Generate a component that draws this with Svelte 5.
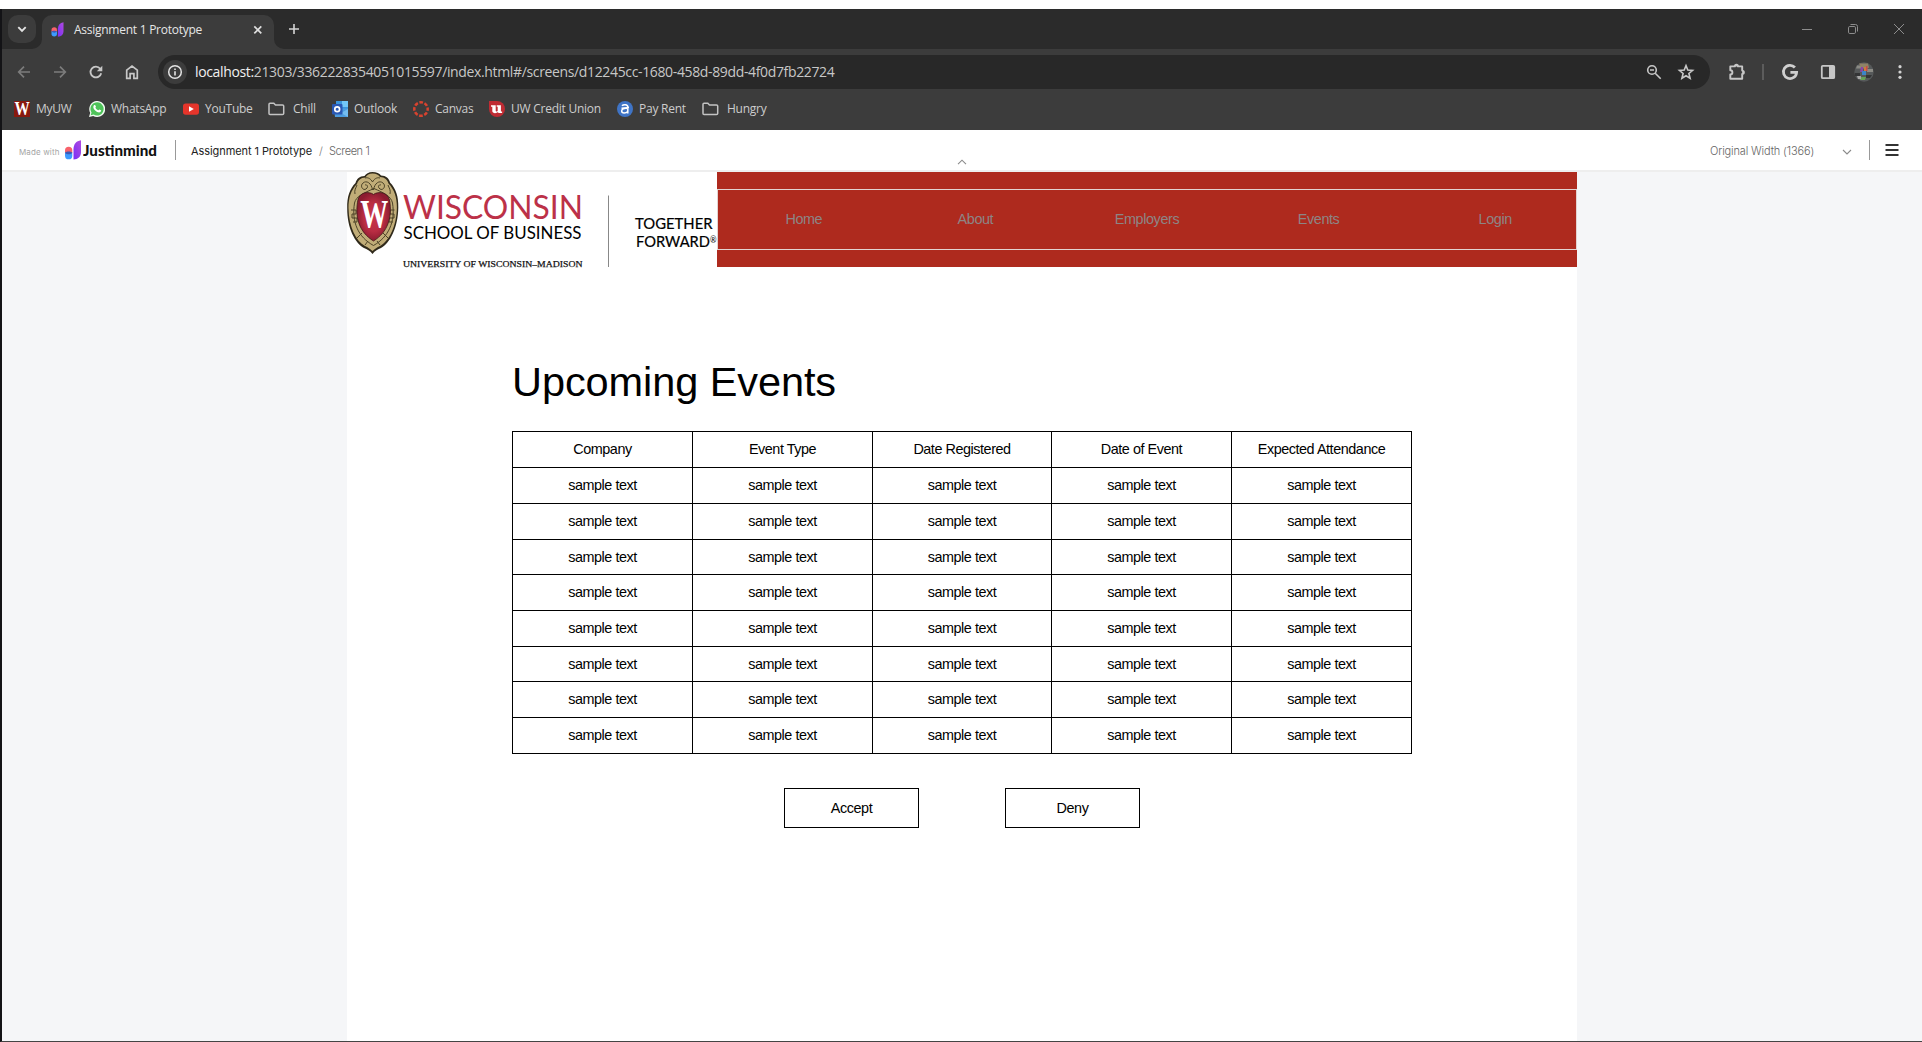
<script>
  const bookmarks = [
    { icon: 'uw', label: 'MyUW', width: 75 },
    { icon: 'whatsapp', label: 'WhatsApp', width: 94 },
    { icon: 'youtube', label: 'YouTube', width: 85 },
    { icon: 'folder', label: 'Chill', width: 64 },
    { icon: 'outlook', label: 'Outlook', width: 81 },
    { icon: 'canvas', label: 'Canvas', width: 76 },
    { icon: 'credit', label: 'UW Credit Union', width: 128 },
    { icon: 'rent', label: 'Pay Rent', width: 85 },
    { icon: 'folder', label: 'Hungry', width: 80 },
  ];
  const nav = ['Home', 'About', 'Employers', 'Events', 'Login'];
  const columns = ['Company', 'Event Type', 'Date Registered', 'Date of Event', 'Expected Attendance'];
  const rows = Array.from({ length: 8 }, () => columns.map(() => 'sample text'));
</script>

<div class="screen">
  <div class="window">
    <div class="tabstrip">
      <button class="tab-search" aria-label="Search tabs">
        <svg width="28" height="28" viewBox="0 0 28 28"><path d="M10.3 12.2l3.7 3.7 3.7-3.7" fill="none" stroke="#e3e3e3" stroke-width="1.9" /></svg>
      </button>
      <div class="tab">
        <svg class="corner left" width="10" height="10" viewBox="0 0 10 10"><path d="M10 0v10H0A10 10 0 0 0 10 0z" fill="#3c3c3c" /></svg>
        <svg class="favicon" width="13" height="15" viewBox="0 0 16 20"><use href="#jim" /></svg>
        <span class="tab-title">Assignment 1 Prototype</span>
        <svg class="tab-close" width="10" height="10" viewBox="0 0 10 10"><path d="M1.3 1.3l7 7M8.3 1.3l-7 7" stroke="#dedede" stroke-width="1.7" /></svg>
        <svg class="corner right" width="10" height="10" viewBox="0 0 10 10"><path d="M0 0v10h10A10 10 0 0 1 0 0z" fill="#3c3c3c" /></svg>
      </div>
      <svg class="new-tab" width="12" height="12" viewBox="0 0 12 12"><path d="M6 1v10M1 6h10" stroke="#d5d5d5" stroke-width="1.6" /></svg>
      <div class="controls">
        <svg width="12" height="12" viewBox="0 0 12 12"><path d="M1 6.5h10" stroke="#8d8d8d" /></svg>
        <svg width="12" height="12" viewBox="0 0 12 12" fill="none" stroke="#8d8d8d"><rect x="1.5" y="3.5" width="7" height="7" rx="1.3" /><path d="M3.5 1.5h5a2 2 0 0 1 2 2v5" /></svg>
        <svg width="12" height="12" viewBox="0 0 12 12"><path d="M1 1l10 10M11 1L1 11" stroke="#8d8d8d" /></svg>
      </div>
    </div>

    <div class="toolbar">
      <div class="nav-icons">
        <svg width="16" height="16" viewBox="0 0 16 16" fill="none" stroke="#7c7c7c" stroke-width="1.7"><path d="M14 8H3M8 2.7L2.7 8 8 13.3" /></svg>
        <svg width="16" height="16" viewBox="0 0 16 16" fill="none" stroke="#7c7c7c" stroke-width="1.7"><path d="M2 8h11M8 2.7L13.3 8 8 13.3" /></svg>
        <svg width="16" height="16" viewBox="0 0 16 16"><path d="M13.2 9.2A5.4 5.4 0 1 1 12.2 4.7L13.4 6" fill="none" stroke="#c7c7c7" stroke-width="1.8" /><path d="M14.3 1.7v5.5H8.8z" fill="#c7c7c7" /></svg>
        <svg width="16" height="16" viewBox="0 0 16 16"><path d="M2.7 6.2L8 2.1l5.3 4.1v8.1H9.9V9.6H6.1v4.7H2.7z" fill="none" stroke="#c7c7c7" stroke-width="1.7" /></svg>
      </div>
      <div class="omnibox">
        <span class="site-info">
          <svg width="16" height="16" viewBox="0 0 16 16"><circle cx="8" cy="8" r="6.3" fill="none" stroke="#e3e3e3" stroke-width="1.5" /><path d="M8 7.2v4.2M8 4.4v1.6" stroke="#e3e3e3" stroke-width="1.6" /></svg>
        </span>
        <span class="url"><b>localhost:</b>21303/3362228354051015597/index.html#/screens/d12245cc-1680-458d-89dd-4f0d7fb22724</span>
        <svg class="zoom" width="16" height="16" viewBox="0 0 16 16" fill="none" stroke="#c7c7c7" stroke-width="1.6"><circle cx="6" cy="6" r="4.3" /><path d="M9.2 9.2l5.5 5.5M4 6h4" /></svg>
        <svg width="18" height="18" viewBox="0 0 18 18"><path d="M9 2.6l1.8 4.4 4.8.4-3.7 3.1 1.2 4.7L9 12.7l-4.1 2.5 1.2-4.7-3.7-3.1 4.8-.4z" fill="none" stroke="#c7c7c7" stroke-width="1.6" /></svg>
      </div>
      <div class="actions">
        <svg width="18" height="18" viewBox="0 0 18 18"><path d="M2.3 3.4h4.5a1.6 1.6 0 0 1 3.2 0h4.2v4.2a1.6 1.6 0 0 1 0 3.4v4.7H2.3v-4.2c2.8-.2 2.8-4 0-4.2z" fill="none" stroke="#c7c7c7" stroke-width="1.9" stroke-linejoin="round" /><path d="M6.7 3.4a1.7 1.7 0 0 1 3.4 0zM14.2 7.5a1.8 1.8 0 0 1 0 3.4z" fill="#c7c7c7" /></svg>
        <span class="split"></span>
        <svg width="18" height="18" viewBox="0 0 18 18"><path d="M13.9 4.5A6.6 6.6 0 1 0 15.6 9.3H9.4" fill="none" stroke="#cfcfcf" stroke-width="2.8" /></svg>
        <svg width="16" height="16" viewBox="0 0 16 16"><rect x="1.8" y="1.8" width="12.4" height="12.4" rx="1" fill="none" stroke="#c7c7c7" stroke-width="1.8" /><path d="M9 2h5v12H9z" fill="#c7c7c7" /></svg>
        <svg class="avatar" width="20" height="20" viewBox="0 0 20 20">
          <circle cx="10" cy="10" r="9.7" fill="#56595a" />
          <path d="M3 3.5h5v3H2zM13 7h6v3h-6z" fill="#8a8a84" /><path d="M1 11h5v3H1zM12 13h6l-2 3h-4z" fill="#343536" />
          <path d="M5 1.500h9l1 4-3 2-5-2z" fill="#8f8266" /><path d="M7 5h2v5H6z" fill="#8b45a8" /><path d="M10 5h2v5h-2z" fill="#d0783a" /><path d="M8 9h4v4H8z" fill="#3c85c8" /><path d="M12 4h1.500v5H12z" fill="#c84a4a" /><path d="M7 15h5l-1 3H6z" fill="#65a056" /><path d="M3 14h4v3H4z" fill="#a7a7a7" />
        </svg>
        <svg width="16" height="16" viewBox="0 0 16 16" fill="#d4d4d4"><circle cx="8" cy="2.7" r="1.6" /><circle cx="8" cy="8" r="1.6" /><circle cx="8" cy="13.3" r="1.6" /></svg>
      </div>
    </div>

    <div class="bookmarks">
      {#each bookmarks as mark}
        <div class="bookmark" class:folder={mark.icon === 'folder'} style="width: {mark.width}px">
          {#if mark.icon === 'uw'}
            <svg class="uw" width="16" height="16" viewBox="0 0 16 16"><path d="M0 0h16v16H0z" fill="#87190f" /><text x="8" y="13.800" text-anchor="middle" textLength="15" lengthAdjust="spacingAndGlyphs">W</text></svg>
          {:else if mark.icon === 'whatsapp'}
            <svg width="16" height="16" viewBox="0 0 16 16"><path d="M0 16l1.2-4.2A8 8 0 1 1 4.2 14.9z" fill="#f2fbf2" /><path d="M1.7 14.3l.8-2.8a6.6 6.6 0 1 1 2.2 2.1z" fill="#4fc45a" /><path d="M5.3 4.1c.7-.6 1.2.2 1.6 1.3.2.6-.6.9-.5 1.3.6 1.2 1.6 2 2.7 2.5.6.1.8-1 1.4-.8l1.5.8c.5.4-.3 2.1-1.8 2.2C7.6 11.3 4.2 8 4.3 5.9c0-.8.5-1.4 1-1.8z" fill="#fff" /></svg>
          {:else if mark.icon === 'youtube'}
            <svg width="16" height="16" viewBox="0 0 16 16"><rect y="2.4" width="16" height="11.3" rx="2.6" fill="#e5352b" /><path d="M6 5.2v5.6L10.8 8z" fill="#fff" /></svg>
          {:else if mark.icon === 'folder'}
            <svg width="17" height="16" viewBox="0 0 17 16"><path d="M1 3.2c0-.6.4-1 1-1h3.800l1.700 1.900h7c.7 0 1.200.4 1.200 1v7.300c0 .6-.5 1-1.200 1H2c-.6 0-1-.4-1-1z" fill="none" stroke="#c3c3c3" stroke-width="1.5" /></svg>
          {:else if mark.icon === 'outlook'}
            <svg width="16" height="16" viewBox="0 0 16 16"><path d="M4 0h12v8H4z" fill="#3b95dc" /><path d="M10 0h6v6h-6z" fill="#72c7f7" /><path d="M2 7.500h14V16H3z" fill="#4d9de0" /><path d="M16 8v8l-7-4z" fill="#74bdf0" /><rect y="3" width="10.500" height="10.500" rx="1" fill="#2a58b4" /><circle cx="5.200" cy="8.300" r="2.400" fill="none" stroke="#fff" stroke-width="1.700" /></svg>
          {:else if mark.icon === 'canvas'}
            <svg width="16" height="16" viewBox="0 0 16 16"><circle cx="8" cy="8" r="6.700" fill="none" stroke="#d8432f" stroke-width="2.500" stroke-dasharray="3.660 1.600" stroke-dashoffset="1.830" /></svg>
          {:else if mark.icon === 'credit'}
            <svg width="16" height="16" viewBox="0 0 16 16"><path d="M0 0h8a8 8 0 1 1-8 8z" fill="#bf2b33" /><path d="M2 4.300h4.700v5.500c0 1 2 .8 2-.3V5.700h-1V4.300h4.200v6.300h1.200V12H9.200v-1C7.200 12.800 3.300 12.500 3.300 10V5.700H2z" fill="#fff" /></svg>
          {:else}
            <svg width="16" height="16" viewBox="0 0 16 16"><circle cx="8" cy="8" r="8" fill="#3f74c6" /><path d="M5 4.800C6.300 3.200 10.800 3 10.800 6v6.600M10.700 7.500C7 7 4.700 8 4.700 10c0 2.700 4.500 2.600 6 .3M4.500 7.200l7.500-.8" fill="none" stroke="#fff" stroke-width="1.500" /></svg>
          {/if}
          <span>{mark.label}</span>
        </div>
      {/each}
    </div>

    <header class="viewer">
      <span class="made">Made with</span>
      <svg class="brand-mark" width="16" height="20" viewBox="0 0 16 20">
        <defs>
          <linearGradient id="violet" x1="0" y1="1" x2="1" y2="0"><stop stop-color="#7a2ff5" /><stop offset="1" stop-color="#b04be0" /></linearGradient>
          <g id="jim"><path d="M8.500 19.500V9.500C8.500 4 11 1 16 .2V12c0 5-3 7.200-7.500 7.500z" fill="url(#violet)" /><path d="M0 13v-2.500a3.600 3.600 0 0 1 7.300 0V13z" fill="#f8626b" /><path d="M0 12.700h7.300v3a3.600 3.600 0 0 1-7.300 0z" fill="#3d9bff" /><path d="M0 12.700c1.500-1.500 5.800-1.500 7.300 0-1.500 2-5.800 2-7.300 0z" fill="#3d5ab5" /></g>
        </defs>
        <use href="#jim" />
      </svg>
      <svg class="brand-name" width="76" height="22" viewBox="0 0 76 22"><text x="0" y="17" textLength="74" lengthAdjust="spacingAndGlyphs">Justinmind</text></svg>
      <span class="rule"></span>
      <span class="project">Assignment 1 Prototype</span>
      <span class="slash">/</span>
      <span class="current">Screen 1</span>
      <svg class="collapse" width="10" height="6" viewBox="0 0 10 6"><path d="M1 5.200l4-4 4 4" fill="none" stroke="#8a8a8a" stroke-width="1.100" /></svg>
      <div class="view-options">
        <span class="width-label">Original Width (1366)</span>
        <svg class="drop" width="10" height="6" viewBox="0 0 10 6"><path d="M1 1l4 4 4-4" fill="none" stroke="#8a8a8a" stroke-width="1.100" /></svg>
        <span class="rule"></span>
        <svg class="burger" width="14" height="14" viewBox="0 0 14 14"><path d="M.5 2h13M.5 7h13M.5 12h13" stroke="#333" stroke-width="1.800" /></svg>
      </div>
    </header>

    <main>
      <div class="page">
        <div class="masthead">
          <svg class="logo" width="370" height="96" viewBox="0 0 370 96">
            <defs><radialGradient id="crimson"><stop stop-color="#c9354a" /><stop offset=".6" stop-color="#b92d43" /><stop offset="1" stop-color="#8c1c30" /></radialGradient></defs>
            <path d="M25.500 0c4 0 7 1.500 8.500 3.500 5 0 8 3 9 7 6 6 8.500 14 8.300 25C51 56 43 71 34 76c-3 1.500-6 2.500-8.500 6C23 78.500 20 77.500 17 76 8 71 0 56 .2 36 0 25 2.500 17 8.500 11c1-4 4-7 9-7C19 2 21.500 0 25.500 0z" fill="#302a1b" />
            <path d="M25.500 1.500c4 0 6 1.500 7.500 3.500 5 0 7.500 3 8.500 6.500 5.800 6 8.500 14 8.400 24-.3 19-7.900 33.500-16.900 38.500-3 1.500-5 2.500-7.500 5-2.500-2.500-4.500-3.500-7.500-5C9 69 1.800 55 1.500 36c-.1-10 2.500-18 8.500-24C11 8.500 13.500 5.500 18.500 5.500 20 3 22 1.500 25.500 1.500z" fill="#c1ad78" />
            <g fill="none" stroke="#4c4327" stroke-width="1">
              <path d="M27 16.500C17 21 9 24 7.500 31 4.500 50 11 65 26.500 73.500 41.500 65 48.500 50 45.500 31 44 24 37 21 27 16.500z" />
              <path d="M25.500 18c-1-7-6-10-9.500-7s0 8 3 6 1-5-1-4M26.500 18c1-7 6-10 9.500-7s0 8-3 6-1-5 1-4M18 6c3-1 6 1 7.500 4C27 7 30 5 33 6M10 13c-1 3-3 5-2 9M41 13c1 3 3 5 2 9" />
              <path d="M4 38h5v4H5v4h5v4H6M47.500 38h-4.500v4h4v4h-5v4h4M10 66l5-5M41 66l-5-5M18 73l3-4M33 73l-3-4" />
            </g>
            <path d="M26.500 22.500C22 19 13 20 11 27.500 7.500 45 12 60 26.500 69 41 60 45.500 45 42.500 28 40.500 20 31 19 26.500 22.500z" fill="url(#crimson)" stroke="#3f1a18" stroke-width=".8" />
            <text class="crest-w" x="27.200" y="55" text-anchor="middle" textLength="28" lengthAdjust="spacingAndGlyphs">W</text>
            <text class="wisconsin" x="56" y="47" textLength="180" lengthAdjust="spacingAndGlyphs">WISCONSIN</text>
            <text class="school" x="56.500" y="66.700" textLength="178" lengthAdjust="spacingAndGlyphs">SCHOOL OF BUSINESS</text>
            <text class="university" x="56" y="95" textLength="179.500" lengthAdjust="spacingAndGlyphs">UNIVERSITY OF WISCONSIN–MADISON</text>
            <path d="M261.500 23.500V95" stroke="#888" />
            <text class="tagline" x="288" y="57.300" textLength="77.500" lengthAdjust="spacingAndGlyphs">TOGETHER</text>
            <text class="tagline" x="289" y="75" textLength="74" lengthAdjust="spacingAndGlyphs">FORWARD</text>
            <text class="reg" x="363" y="71" textLength="6.500" lengthAdjust="spacingAndGlyphs">®</text>
          </svg>
          <div class="banner">
            <nav>
              {#each nav as item}<a href="#/">{item}</a>{/each}
            </nav>
          </div>
        </div>

        <h1>Upcoming Events</h1>

        <div class="table">
          {#each columns as name}<div class="cell">{name}</div>{/each}
          {#each rows as row}
            {#each row as value}<div class="cell">{value}</div>{/each}
          {/each}
        </div>

        <div class="buttons">
          <button>Accept</button>
          <button>Deny</button>
        </div>
      </div>
    </main>
  </div>
</div>

<style>
  :global(body) { margin: 0; background: #fff; overflow: hidden; }
  * { box-sizing: border-box; }
  svg { flex: none; display: block; }
  span { white-space: nowrap; }

  .screen { height: 1042px; padding-top: 9px; background: #fff; }
  .window { height: 1033px; border-left: 2px solid #131316; border-bottom: 1px solid #444; display: flex; flex-direction: column; font-family: 'Open Sans', 'Noto Sans', sans-serif; background: #3c3c3c; }

  .tabstrip { height: 40px; flex: none; background: #2b2b2b; display: flex; align-items: flex-start; padding: 6px 17px 0 6px; }
  .tab-search { width: 28px; height: 28px; border: 0; padding: 0; border-radius: 10px; background: #3c3c3c; }
  .tab { position: relative; width: 232px; height: 34px; margin-left: 6px; padding: 0 11px 5px 9px; display: flex; align-items: center; border-radius: 10px 10px 0 0; background: #3c3c3c; }
  .corner { position: absolute; bottom: 0; }
  .left { left: -10px; }
  .right { right: -10px; }
  .tab-title { margin-left: 10px; flex: 1; font-size: 12px; letter-spacing: -0.26px; color: #e6e6e6; }
  .new-tab { margin: 8px 0 0 14px; }
  .controls { margin-left: auto; padding-top: 8px; display: flex; gap: 34px; }

  .toolbar { height: 46px; flex: none; display: flex; align-items: center; padding: 0 12px 0 14px; border-radius: 10px 10px 0 0; }
  .nav-icons { display: flex; gap: 20px; width: 142px; }
  .omnibox { width: 1552px; height: 34px; border-radius: 17px; background: #282828; display: flex; align-items: center; padding: 0 15px 0 5px; }
  .site-info { width: 24px; height: 24px; border-radius: 50%; background: #3c3c3c; display: grid; place-items: center; }
  .url { flex: 1; margin-left: 8px; padding-bottom: 1px; font-size: 14px; letter-spacing: -0.355px; color: #c7c7c7; }
  .url b { font-weight: 400; color: #f0f0f0; }
  .zoom { margin-right: 15px; }
  .actions { flex: 1; display: flex; align-items: center; padding-left: 18px; }
  .split { width: 2px; height: 16px; margin: 0 17px 0 16px; background: #5c5c5c; }
  .actions .split + svg { margin-right: 21px; }
  .avatar { margin: 0 18px; }

  .bookmarks { height: 35px; flex: none; display: flex; padding: 0 0 8px 12px; }
  .bookmark { display: flex; align-items: center; gap: 6px; font-size: 12px; letter-spacing: -0.25px; color: #cdcdcd; }
  .folder { gap: 8px; }
  .uw { overflow: visible; }
  .uw text { font: bold 18px 'Liberation Serif', serif; fill: #fff; }

  .viewer { position: relative; height: 42px; flex: none; background: #fff; border-bottom: 2px solid #eee; display: flex; align-items: center; padding: 0 23px 0 17px; font-family: Inter, sans-serif; }
  .made { width: 46px; padding-top: 4px; font-size: 8px; letter-spacing: 0.13px; color: #a5a5a5; }
  .brand-name { margin-left: 3px; }
  .brand-name text { font: 900 15px Lato, sans-serif; fill: #111; }
  .rule { width: 1px; height: 20px; background: #999; }
  .viewer > .rule { margin: 0 15px 0 16px; }
  .project, .slash, .current { padding-top: 2px; font: 300 11px/16px Inter, sans-serif; }
  .project { width: 128px; color: #222; font-weight: 400; letter-spacing: -0.08px; }
  .slash { width: 10px; color: #777; }
  .current { color: #666; letter-spacing: -0.4px; }
  .brand-name { margin-left: 2px; }
  .collapse { position: absolute; left: 955px; bottom: 5px; }
  .view-options { margin-left: auto; display: flex; align-items: center; }
  .width-label { width: 132px; padding-top: 2px; font-size: 11px; font-weight: 300; letter-spacing: -0.14px; color: #666; }
  .drop { margin: 3px 17px 0 0; }
  .burger { margin-left: 15px; }

  main { flex: 1; min-height: 0; background: #f5f6f8; padding-left: 345px; }
  .page { width: 1230px; height: 100%; background: #fff; font-family: 'Liberation Sans', Arial, sans-serif; }
  .masthead { display: flex; height: 95px; }
  .logo { overflow: visible; }
  .crest-w { font: bold 39px 'Liberation Serif', serif; fill: #fff; }
  .wisconsin { font: 400 33.5px Lato, sans-serif; fill: #bc3148; }
  .school { font: 400 18px Lato, sans-serif; fill: #000; }
  .university { font: 9px 'Liberation Serif', serif; fill: #111; stroke: #111; stroke-width: 0.25px; }
  .tagline { font: 400 15.5px Lato, sans-serif; fill: #000; stroke: #000; stroke-width: 0.2px; }
  .reg { font: 9px Lato, sans-serif; fill: #000; }
  .banner { flex: 1; background: #ae2a1e; padding: 17px 0; }
  nav { height: 61px; padding-bottom: 2px; border: 1px solid #e3d3d1; display: grid; grid-template-columns: repeat(5, 1fr); align-items: center; text-align: center; }
  nav a { font-size: 14.4px; letter-spacing: -0.4px; color: #8d8585; text-decoration: none; }
  nav a:last-child { padding-left: 10px; }

  h1 { margin: 91px 0 0 165px; height: 48px; font-size: 41.5px; line-height: 47px; font-weight: 400; letter-spacing: -0.08px; color: #000; }
  .table { margin: 25px 0 0 165px; width: 900px; display: grid; grid-template-columns: 180px 180px 179px 180px 180px; grid-template-rows: 36px 36px 36px 35px 36px 36px 35px 36px 36px; border-right: 1px solid #000; border-bottom: 1px solid #000; }
  .cell { padding-bottom: 1px; border-left: 1px solid #000; border-top: 1px solid #000; display: grid; place-items: center; font-size: 14.4px; letter-spacing: -0.45px; color: #000; }
  .buttons { display: flex; gap: 86px; margin: 34px 0 0 437px; }
  .buttons button { width: 135px; height: 40px; padding: 0 0 1px; border: 1px solid #000; background: #fff; font: 14.4px 'Liberation Sans', Arial, sans-serif; letter-spacing: -0.4px; color: #000; }
</style>
